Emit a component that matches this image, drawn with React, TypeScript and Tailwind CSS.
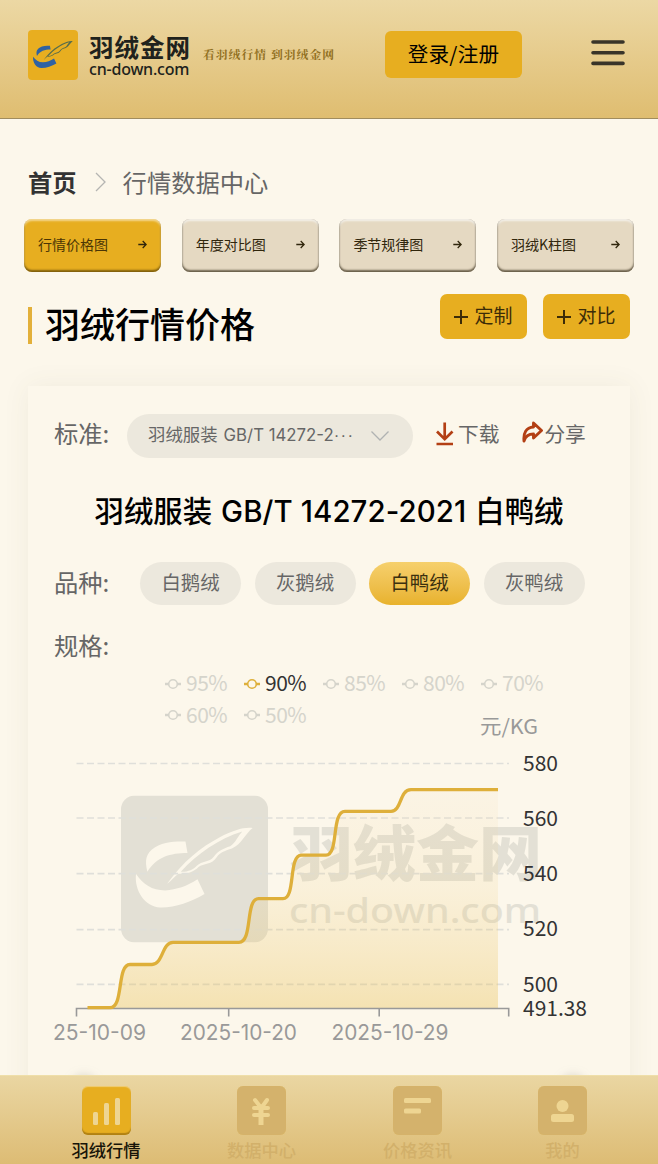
import type { ReactNode } from "react";

const linePath =
  "M87.5 1007.7H110C124 1007.7 116.5 964.5 130 964.5H152C163 964.5 162 942.3 173 942.3H239C253 942.3 245 898.7 258.500 898.700H283C296 898.700 288 855.2 301.500 855.200H326C339 855.200 331 811.300 345 811.300H391C402 811.300 399 789.700 411 789.700H498";

const dashedLines = [763.5, 818, 873.7, 929.7, 984.3];

const axisLabels = [
  { text: "580", y: 770.5, width: 35 },
  { text: "560", y: 825.5, width: 35 },
  { text: "540", y: 881, width: 35 },
  { text: "520", y: 936, width: 35 },
  { text: "500", y: 991.5, width: 35 },
  { text: "491.38", y: 1015.5, width: 64 },
];

const tabs = ["行情价格图", "年度对比图", "季节规律图", "羽绒K柱图"];
const varieties = ["白鹅绒", "灰鹅绒", "白鸭绒", "灰鸭绒"];
const legendRows = [
  ["95%", "90%", "85%", "80%", "70%"],
  ["60%", "50%"],
];

function QuillShape({ swoosh, feather }: { swoosh: string; feather: string }) {
  return (
    <>
      <path fill={swoosh} d="M262 394C254 362 256 340 284 322C312 304 345 304 376 304L382 338C330 338 290 350 262 394Z" />
      <path fill={swoosh} d="M228 401C250 432 275 450 315 450C350 448 380 438 412 417L433 461C390 486 345 502 300 501C255 500 222 450 228 401Z" />
      <path
        fill={feather}
        fillRule="evenodd"
        d="M321 430C370 362 420 322 480 290C520 270 550 260 577 263C555 280 545 310 515 325C495 331 480 337 470 350C455 374 430 368 415 380C400 396 375 402 355 400C343 408 335 420 321 430ZM362 394C382 395 400 388 410 376C425 362 448 366 460 350C475 330 490 325 510 318C526 308 534 286 546 274C475 296 412 340 362 394Z"
      />
    </>
  );
}

function Arrow() {
  return (
    <svg className="size-[9px]" viewBox="0 0 9 9" fill="none" stroke="#30260c" strokeWidth="1.300">
      <path d="M0.300 4.500H8M4.700 1L8.200 4.500L4.700 8" />
    </svg>
  );
}

function Plus() {
  return (
    <svg className="size-[14px]" viewBox="0 0 14 14" stroke="#3c2c08" strokeWidth="2">
      <path d="M0 7H14M7 0V14" />
    </svg>
  );
}

function LegendItem({ label }: { label: string }) {
  const active = label === "90%";
  return (
    <div className="flex w-[79px] items-center gap-[5px]">
      <svg className="h-3 w-4" viewBox="0 0 16 12" fill="none" stroke={active ? "#deb03c" : "#d5d4cb"}>
        <path strokeWidth="2.500" d="M0 6H4M12 6H16" />
        <circle cx="8" cy="6" r="4.300" strokeWidth="1.600" />
      </svg>
      <span className={active ? "-translate-y-px tracking-[-0.500px] text-[#333]" : "-translate-y-px tracking-[-0.500px] text-[#d5d4cb]"}>{label}</span>
    </div>
  );
}

function NavItem({ label, active, className, children }: { label: string; active?: boolean; className: string; children: ReactNode }) {
  return (
    <a className={`flex shrink-0 flex-col items-center ${className}`}>
      <span
        className={
          active
            ? "size-[49px] rounded-[6px] bg-[#e7ae20] shadow-[inset_0_-2px_1px_rgba(110,75,0,0.450),inset_0_1px_1px_rgba(255,255,255,0.400)]"
            : "size-[49px] rounded-[6px] bg-[#d4b26c] shadow-[inset_0_0_1px_#ddb85f]"
        }
      >
        <svg viewBox="0 0 49 49" className="size-[49px]" fill="#eed592">
          {children}
        </svg>
      </span>
      <span
        className={
          active
            ? "mt-[2px] text-[17.300px] leading-[26px] font-medium whitespace-nowrap text-[#171408]"
            : "mt-[2px] text-[17.300px] leading-[26px] font-medium whitespace-nowrap text-[#d2b06a]"
        }
      >
        {label}
      </span>
    </a>
  );
}

export default function App() {
  return (
    <div className="flex h-[1164px] w-[658px] flex-col overflow-hidden bg-[#fcf7eb] font-['Noto_Sans_CJK_SC',sans-serif] text-[#666]">
      <header className="flex h-[119px] shrink-0 items-start border-b border-[#a08c5e] bg-linear-to-b from-[#ecd8a4] to-[#dfbd70] pl-7">
        <svg className="mt-[30px] size-[50px] shrink-0" viewBox="183 166 440 440">
          <rect x="183" y="166" width="440" height="440" rx="36" fill="#e8ae20" />
          <QuillShape swoosh="#2f62a2" feather="#566c4c" />
        </svg>
        <svg className="mt-[24px] ml-[11px] h-[62px] w-[102px] shrink-0 overflow-visible" viewBox="0 -6 102 62" fill="#20221c">
          <text x="0" y="26.500" fontSize="24.500" fontWeight="700" textLength="101" lengthAdjust="spacing">羽绒金网</text>
          <text x="0" y="44.500" fontSize="16" fontWeight="500" textLength="100.500" lengthAdjust="spacing" fontFamily="'Noto Sans', sans-serif">cn-down.com</text>
        </svg>
        <svg className="mt-[44px] ml-[12px] h-[24px] w-[132px] shrink-0" viewBox="0 0 132 24" fill="#91701f">
          <text x="0" y="15" fontSize="11.800" fontWeight="700" textLength="131" lengthAdjust="spacing" fontFamily="'Noto Serif CJK SC', 'Noto Sans CJK SC', serif">看羽绒行情 到羽绒金网</text>
        </svg>
        <button className="mt-[31px] ml-[50px] h-[47px] w-[137px] shrink-0 rounded-[6px] bg-[#e7ae20] pb-[3px] text-[20.600px] leading-[43px] tracking-[0.200px] text-black">登录/注册</button>
        <svg className="mt-[39px] ml-[69px] h-[28px] w-[34px] shrink-0" viewBox="0 0 34 28" stroke="#393429" strokeWidth="3.600" strokeLinecap="round">
          <path d="M2 3H32M2 13.700H32M2 24.400H32" />
        </svg>
      </header>

      <main className="min-h-0 flex-1 overflow-hidden">
        <nav className="mt-[47px] flex h-[32px] items-center pl-7 text-[24.300px] leading-[32px]">
          <span className="font-bold text-[#333]">首页</span>
          <svg className="mr-[17px] ml-[18px] h-[20px] w-[11px]" viewBox="0 0 11 20" fill="none" stroke="#b5b5b2" strokeWidth="1.300">
            <path d="M1 1L10 10L1 19" />
          </svg>
          <span>行情数据中心</span>
        </nav>

        <div className="mt-[21px] flex gap-[20.700px] pl-6">
          {tabs.map((tab, i) => (
            <button
              key={tab}
              className={
                i === 0
                  ? "flex h-[53px] w-[137px] items-center justify-between rounded-[8px] bg-[#e7ae20] pr-[14px] pb-[2px] pl-[14px] text-[14px] text-[#4a3505] shadow-[inset_0_-2px_2px_rgba(70,50,0,0.650),inset_0_2px_2px_rgba(255,255,255,0.500)]"
                  : "flex h-[53px] w-[137px] items-center justify-between rounded-[8px] bg-[#e5d9c2] pr-[14px] pb-[2px] pl-[14px] text-[14px] text-[#30260c] shadow-[inset_0_-2px_2px_rgba(60,50,30,0.700),inset_0_2px_2px_rgba(255,255,255,0.700),inset_0_0_2px_rgba(60,50,30,0.400)]"
              }
            >
              {tab}
              <Arrow />
            </button>
          ))}
        </div>

        <div className="mt-[22px] flex h-[50px] items-start pr-7 pl-7">
          <div className="mt-[13px] h-[37px] w-[4px] bg-[#e3b03a]" />
          <h1 className="ml-[13px] flex-1 text-[35px] leading-[57px] font-medium text-black">羽绒行情价格</h1>
          <button className="flex h-[45px] w-[87px] items-center justify-center gap-[6px] rounded-[7px] bg-[#e7ae20] text-[19px] text-[#3c2c08]">
            <Plus />
            <span className="-translate-y-px">定制</span>
          </button>
          <button className="ml-[16px] flex h-[45px] w-[87px] items-center justify-center gap-[6px] rounded-[7px] bg-[#e7ae20] text-[19px] text-[#3c2c08]">
            <Plus />
            <span className="-translate-y-px">对比</span>
          </button>
        </div>

        <section className="mx-7 mt-[42px] h-[740px] bg-[#fcf7eb] pt-[28px] shadow-[0_0_26px_rgba(90,80,50,0.070)]">
          <div className="flex h-[44px] items-center pl-[26px]">
            <span className="w-[73px] -translate-y-[3px] text-[24.300px] leading-[44px]">标准:</span>
            <div className="flex h-[44px] w-[286px] items-center rounded-full bg-[#ece8dd] pl-[21px]">
              <span className="flex w-[206px] -translate-y-px items-baseline text-[17.400px] leading-[42px] whitespace-nowrap">
                羽绒服装
                <span className="ml-[6px] font-['Inter','Noto_Sans_CJK_SC',sans-serif] text-[16.800px]">
                  GB/T 14272-2<span className="font-['Liberation_Sans',sans-serif] tracking-[1.300px]">···</span>
                </span>
              </span>
              <svg className="ml-[17px] h-[10px] w-[18px]" viewBox="0 0 18 10" fill="none" stroke="#b0b2b2" strokeWidth="1.300">
                <path d="M0.500 0.500L9 9L17.500 0.500" />
              </svg>
            </div>
            <svg className="ml-[22px] h-[24px] w-[20px] -translate-y-[2px]" viewBox="0 0 20 24" fill="none" stroke="#b33f14" strokeWidth="2.700">
              <path d="M9.700 0.500V17M2 9.500L9.700 17.200L17.500 9.500M1.500 22H18" />
            </svg>
            <span className="ml-[3px] -translate-y-[3px] text-[20.700px] leading-[44px]">下载</span>
            <svg className="ml-[23px] h-[24px] w-[22px] -translate-y-[4px]" viewBox="0 0 22 24" fill="none" stroke="#b33f14" strokeWidth="2.900" strokeLinejoin="round">
              <path d="M11.500 3L19.500 10.500L11.500 18V14C7 14 3.500 16 2 21C1.200 13 4 7.500 11.500 7Z" />
            </svg>
            <span className="-translate-y-[3px] text-[20.700px] leading-[44px]">分享</span>
          </div>

          <h2 className="mt-[28px] flex h-[46px] items-baseline justify-center gap-[9px] text-[29.400px] leading-[46px] font-medium whitespace-nowrap text-black">
            羽绒服装
            <span className="font-['Inter',sans-serif] tracking-[0.100px]">GB/T 14272-2021</span>
            白鸭绒
          </h2>

          <div className="mt-[30px] flex h-[43px] items-center pl-[26px]">
            <span className="w-[86px] -translate-y-[2px] text-[24.300px] leading-[43px]">品种:</span>
            <div className="flex gap-[13.500px]">
              {varieties.map((name) => (
                <button
                  key={name}
                  className={
                    name === "白鸭绒"
                      ? "h-[43px] w-[101px] rounded-full bg-linear-to-b from-[#f6d06c] to-[#e8b22b] pb-[3px] text-[19.400px] text-[#3b300f]"
                      : "h-[43px] w-[101px] rounded-full bg-[#ece8dd] pb-[3px] text-[19.400px] text-[#666]"
                  }
                >
                  {name}
                </button>
              ))}
            </div>
          </div>

          <div className="mt-[22px] pl-[26px] text-[24.300px] leading-[36px]">规格:</div>

          <div className="mt-[5px] pl-[137px] text-[21px] leading-[31.500px]">
            {legendRows.map((row) => (
              <div key={row[0]} className="flex">
                {row.map((label) => (
                  <LegendItem key={label} label={label} />
                ))}
              </div>
            ))}
          </div>

          <svg className="block h-[345px] w-[602px] overflow-visible" viewBox="28 731 602 345">
            <defs>
              <linearGradient id="area" x1="0" y1="0" x2="0" y2="1">
                <stop offset="0" stopColor="#f3d9b0" stopOpacity="0.120" />
                <stop offset="0.450" stopColor="#ecc870" stopOpacity="0.140" />
                <stop offset="1" stopColor="#e7bc49" stopOpacity="0.350" />
              </linearGradient>
              <filter id="soft" x="-50%" y="-50%" width="200%" height="200%">
                <feGaussianBlur stdDeviation="4" />
              </filter>
            </defs>
            <svg x="121" y="795.500" width="147" height="147" viewBox="183 166 440 440">
              <rect x="183" y="166" width="440" height="440" rx="42" fill="#e3e0d5" />
              <QuillShape swoosh="#fcf7eb" feather="#fcf7eb" />
            </svg>
            <g fill="#e3e0d5">
              <text x="290" y="876" fontSize="60" fontWeight="900" textLength="252" lengthAdjust="spacingAndGlyphs">羽绒金网</text>
              <text x="289" y="923" fontSize="34" fontWeight="500" textLength="252" lengthAdjust="spacingAndGlyphs" fontFamily="'Noto Sans', sans-serif">cn-down.com</text>
            </g>
            <g stroke="#dfdfda" strokeWidth="1.700" strokeDasharray="7 3.500">
              {dashedLines.map((y) => (
                <path key={y} d={`M76.500 ${y}H509`} />
              ))}
            </g>
            <path fill="url(#area)" d={`${linePath}V1008H87.500Z`} />
            <path fill="none" stroke="#999" strokeWidth="1.600" d="M76.500 1016.500V1008.500H508.700V1016.500M228.700 1008.500V1016.500M379.200 1008.500V1016.500" />
            <path fill="none" stroke="#deaf3a" strokeWidth="3.300" d={linePath} />
            <text x="480" y="733.500" fontSize="20" fill="#999" textLength="58" lengthAdjust="spacingAndGlyphs">元/KG</text>
            <g fontSize="21" fill="#333">
              {axisLabels.map((label) => (
                <text key={label.text} x="523" y={label.y} textLength={label.width} lengthAdjust="spacingAndGlyphs">{label.text}</text>
              ))}
            </g>
            <g fontSize="21" fill="#999" fontFamily="Inter, sans-serif">
              <text x="53" y="1040" textLength="93" lengthAdjust="spacingAndGlyphs">25-10-09</text>
              <text x="180" y="1040" textLength="117" lengthAdjust="spacingAndGlyphs">2025-10-20</text>
              <text x="331.500" y="1040" textLength="117" lengthAdjust="spacingAndGlyphs">2025-10-29</text>
            </g>
            <g fill="#a9a599" fillOpacity="0.350" filter="url(#soft)">
              <ellipse cx="84" cy="1083" rx="12" ry="9" />
              <ellipse cx="573" cy="1083" rx="12" ry="9" />
            </g>
          </svg>
        </section>
      </main>

      <footer className="flex h-[89px] shrink-0 items-start border-t border-[#efdfa9] bg-linear-to-b from-[#ead6a2] to-[#ddbc74] pt-[10px]">
        <NavItem label="羽绒行情" active className="ml-[71px] w-[70px]">
          <rect x="11" y="26" width="5" height="13" rx="1.500" />
          <rect x="22" y="17" width="5" height="22" rx="1.500" />
          <rect x="33" y="12" width="5" height="27" rx="1.500" />
        </NavItem>
        <NavItem label="数据中心" className="ml-[85.500px] w-[70px]">
          <path fill="none" stroke="#eed592" strokeWidth="4" strokeLinecap="round" strokeLinejoin="round" d="M18 14L24.300 22L30 14M17 22H31M17 29H31" />
          <path fill="none" stroke="#eed592" strokeWidth="5" d="M24 22V39" />
        </NavItem>
        <NavItem label="价格资讯" className="ml-[86px] w-[70px]">
          <rect x="11" y="12" width="27" height="5" rx="1.500" />
          <rect x="11" y="22.500" width="17" height="5" rx="1.500" />
        </NavItem>
        <NavItem label="我的" className="ml-[85.500px] w-[49px]">
          <circle cx="24.500" cy="20" r="6" />
          <rect x="13" y="28" width="23" height="8" rx="2.500" />
        </NavItem>
      </footer>
    </div>
  );
}
